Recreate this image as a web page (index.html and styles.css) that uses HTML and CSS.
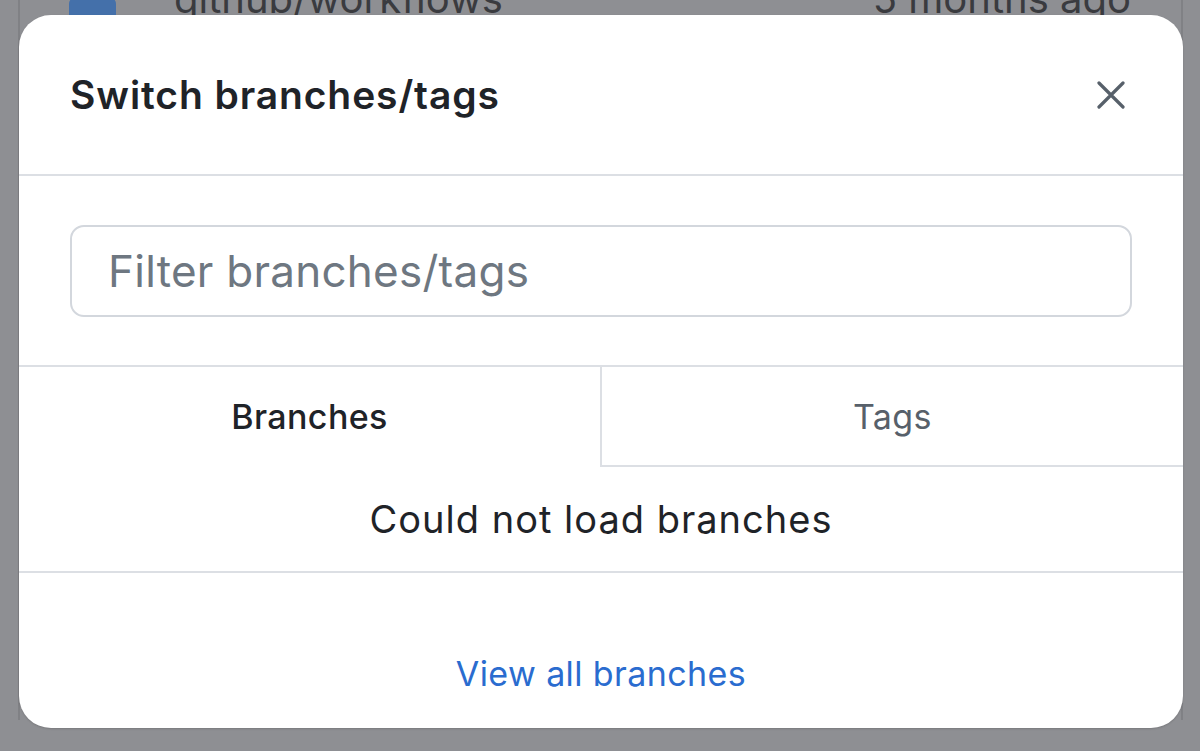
FILE: index.html
```html
<!DOCTYPE html>
<html lang="en">
<head>
<meta charset="utf-8">
<title>Switch branches/tags</title>
<link rel="stylesheet" href="styles.css">
</head>
<body>
  <div class="page">
    <div class="file-row">
      <span class="folder-icon"></span>
      <span class="file-name">github/workflows</span>
      <span class="file-age">5 months ago</span>
    </div>
  </div>

  <div class="modal" role="dialog" aria-label="Switch branches/tags">
    <header class="modal-header">
      <h1 class="modal-title">Switch branches/tags</h1>
      <button class="close-btn" aria-label="Close">
        <svg width="28" height="28" viewBox="0 0 28 28" fill="none" stroke="currentColor" stroke-width="3.2" stroke-linecap="round">
          <path d="M2 2 L26 26 M26 2 L2 26"/>
        </svg>
      </button>
    </header>

    <div class="filter-section">
      <input class="filter-input" type="text" placeholder="Filter branches/tags">
    </div>

    <div class="tabs">
      <div class="tab tab-active">Branches</div>
      <div class="tab tab-inactive">Tags</div>
    </div>

    <div class="message">Could not load branches</div>

    <footer class="modal-footer">
      <a class="footer-link" href="#">View all branches</a>
    </footer>
  </div>
</body>
</html>
```

FILE: styles.css
```css
html, body {
  margin: 0;
  padding: 0;
}

body {
  width: 1200px;
  height: 751px;
  overflow: hidden;
  background: #8e8f93;
  font-family: Inter, "Noto Sans", "Liberation Sans", sans-serif;
  position: relative;
}

.page {
  margin: 0 17px 0 18px;
  height: 751px;
  border-left: 2px solid #808185;
  border-right: 2px solid #808185;
  box-sizing: border-box;
}

.file-row {
  display: flex;
  align-items: flex-start;
  height: 60px;
  margin-top: -31px;
  padding: 0 50px 0 49px;
  color: #3a3b3f;
  font-size: 40px;
  line-height: 60px;
}

.folder-icon {
  width: 47px;
  height: 40px;
  background: #4470aa;
  border-radius: 7px;
  margin-top: 28px;
}

.file-name {
  margin-left: 58px;
  flex: 1;
}

.modal {
  position: absolute;
  left: 19px;
  top: 15px;
  width: 1164px;
  height: 713px;
  background: #ffffff;
  border-radius: 32px;
  display: flex;
  flex-direction: column;
  overflow: hidden;
  box-shadow: 0 1px 2px rgba(0, 0, 0, 0.15);
}

.modal-header {
  height: 159px;
  display: flex;
  align-items: center;
  justify-content: space-between;
  padding: 0 58px 0 51px;
  border-bottom: 2px solid #dcdfe4;
  flex-shrink: 0;
}

.modal-title {
  margin: 0;
  font-size: 39px;
  font-weight: 600;
  color: #1f2328;
  letter-spacing: 0.9px;
}

.close-btn {
  border: 0;
  background: none;
  padding: 0;
  width: 28px;
  height: 28px;
  color: #57606a;
  display: flex;
}

.filter-section {
  padding: 49px 51px 48px 51px;
  border-bottom: 2px solid #dcdfe4;
  flex-shrink: 0;
}

.filter-input {
  display: block;
  width: 100%;
  height: 92px;
  box-sizing: border-box;
  border: 2px solid #d3d7dd;
  border-radius: 14px;
  padding: 0 36px;
  font-family: Inter, "Noto Sans", "Liberation Sans", sans-serif;
  font-size: 44px;
  letter-spacing: 0.25px;
  color: #1f2328;
  outline: none;
}

.filter-input::placeholder {
  color: #6e7781;
}

.tabs {
  display: flex;
  height: 100px;
  flex-shrink: 0;
}

.tab {
  flex: 1 1 0;
  display: flex;
  align-items: center;
  justify-content: center;
  font-size: 34px;
  letter-spacing: 0.4px;
  padding-bottom: 2px;
}

.tab-active {
  color: #1f2328;
  font-weight: 500;
}

.tab-inactive {
  color: #57606a;
  border-left: 2px solid #dcdfe4;
  border-bottom: 2px solid #dcdfe4;
  padding-bottom: 0;
}

.message {
  height: 104px;
  display: flex;
  align-items: center;
  justify-content: center;
  font-size: 38px;
  letter-spacing: 1px;
  color: #1f2328;
  border-bottom: 2px solid #dcdfe4;
  flex-shrink: 0;
}

.modal-footer {
  flex: 1;
  display: flex;
  justify-content: center;
  align-items: flex-start;
  padding-top: 81px;
}

.footer-link {
  font-size: 34px;
  line-height: 40px;
  letter-spacing: 0.4px;
  color: #2a6ccf;
  text-decoration: none;
}
```
